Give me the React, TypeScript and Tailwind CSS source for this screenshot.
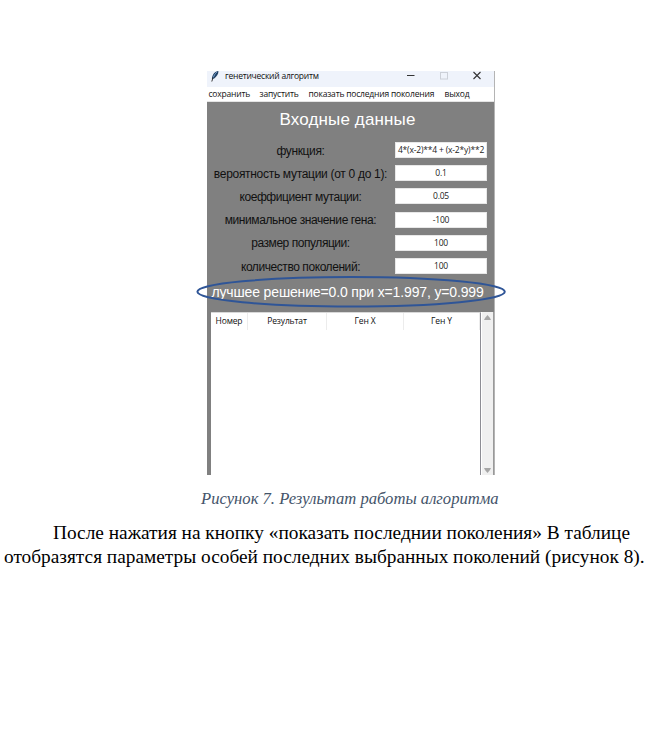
import React from "react";

const fields = [
  { label: "функция:", value: "4*(x-2)**4 + (x-2*y)**2", look: "tracking-[-0.35px]" },
  { label: "вероятность мутации (от 0 до 1):", value: "0.1", look: "tracking-[-0.3px]" },
  { label: "коеффициент мутации:", value: "0.05", look: "tracking-[-0.45px]" },
  { label: "минимальное значение гена:", value: "-100", look: "tracking-[-0.4px]" },
  { label: "размер популяции:", value: "100", look: "tracking-[-0.45px]" },
  { label: "количество поколений:", value: "100", look: "tracking-[-0.43px]" },
];

function TitleBar() {
  return (
    <div className="flex h-4 items-start bg-[#eff3fb] pl-1">
      <svg className="h-[11px] w-[8px]" viewBox="0 0 8 11">
        <path d="M7.4 0C4 .4 1.2 3 .9 8L3.2 7.4C5.8 5.4 7.6 3 7.4 0Z" fill="#1f3f63" />
        <path d="M5.8 1.2C4 2.7 2.8 4.7 2.4 6.5" stroke="#7fa9d6" strokeWidth="1" fill="none" />
        <path d="M2 6.5L.8 10.5" stroke="#222" strokeWidth=".9" />
      </svg>
      <span className="ml-[6px] text-[8.5px] leading-[10px] tracking-[-0.23px] text-[#111]">генетический алгоритм</span>
      <svg className="ml-auto h-[11px] w-[92px]" viewBox="0 0 92 11" fill="none">
        <path d="M5 4.5H12.5" stroke="#333" strokeWidth="1" />
        <rect x="38.5" y="1.5" width="7" height="6.5" stroke="#ccd0d8" />
        <path d="M71.5 1L78.5 8M78.5 1L71.5 8" stroke="#333" strokeWidth="1.1" />
      </svg>
    </div>
  );
}

function Menu() {
  return (
    <div className="flex h-[15px] border-b border-[#e4e4e4] bg-white pl-[1.5px] text-[8.5px] leading-[14px] tracking-[-0.2px] text-[#111]">
      <span className="w-[51px] whitespace-nowrap">сохранить</span>
      <span className="w-[49px] whitespace-nowrap">запустить</span>
      <span className="w-[136px] whitespace-nowrap">показать последния поколения</span>
      <span>выход</span>
    </div>
  );
}

export default function App() {
  return (
    <main className="h-[732px] w-[659px] overflow-hidden bg-white pt-[71px]">
      <section className="relative ml-[207px] flex h-[404px] w-[288px] flex-col border-r border-[#b4b4b4] bg-[#808080] font-['Open_Sans',sans-serif]">
        <TitleBar />
        <Menu />
        <h1 className="h-[37px] whitespace-nowrap pl-[72.5px] pt-[6px] font-['Liberation_Sans',sans-serif] text-[17px] leading-[24px] tracking-[0.14px] text-white">
          Входные данные
        </h1>
        <div className="flex flex-col pt-[3px]">
          {fields.map((f) => (
            <div key={f.label} className="flex h-[23.2px] items-start">
              <span className={`w-[187px] whitespace-nowrap pt-[0.6px] text-center font-['Liberation_Sans',sans-serif] text-[12px] leading-[16px] text-[#111] ${f.look}`}>
                {f.label}
              </span>
              <span className="ml-[1px] h-[16px] w-[92px] whitespace-nowrap border border-[#e8e8e8] bg-white text-center text-[8.5px] leading-[14px] tracking-[-0.18px] text-[#222]">
                {f.value}
              </span>
            </div>
          ))}
        </div>
        <div className="h-[30.8px] whitespace-nowrap pl-[4.5px] font-['Liberation_Sans',sans-serif] text-[14px] leading-[23px] tracking-[-0.15px] text-white">
          лучшее решение=0.0 при x=1.997, y=0.999
        </div>
        <div className="flex min-h-0 flex-1 pl-1">
          <div className="w-[270px] border-r border-t border-[#8d8d94] border-t-[#d8d8d8] bg-white">
            <div className="flex h-[17px] text-center text-[8.5px] leading-[16px] tracking-[-0.15px] text-[#111]">
              <span className="w-[37px] border-r border-[#ececec]">Номер</span>
              <span className="w-[79px] border-r border-[#ececec]">Результат</span>
              <span className="w-[77px] border-r border-[#ececec]">Ген X</span>
              <span className="w-[76px] border-r border-[#ececec]">Ген Y</span>
            </div>
          </div>
          <div className="flex w-[13px] flex-col items-center justify-between border-l border-r border-white border-r-[#999] bg-[#f0f0f0] pb-[1px] pt-[2.5px]">
            <svg className="h-[7px] w-[7px]" viewBox="0 0 7 7"><path d="M0 6L1 4L3.5 1L6 4L7 6Z" fill="#a6a6a6" /></svg>
            <svg className="h-[7px] w-[7px]" viewBox="0 0 7 7"><path d="M0 1L1 3L3.5 6L6 3L7 1Z" fill="#a6a6a6" /></svg>
          </div>
        </div>
        <svg className="absolute left-[-11px] top-[205px] h-[33px] w-[311px]" viewBox="0 0 311 33" fill="none">
          <ellipse cx="155.1" cy="15.8" rx="153.7" ry="14.8" stroke="#2f5597" strokeWidth="2" />
        </svg>
      </section>
      <p className="mt-[13px] whitespace-nowrap pl-[201px] font-['Liberation_Serif',serif] text-[16.63px] italic leading-[21px] text-[#44546a]">
        Рисунок 7. Результат работы алгоритма
      </p>
      <p className="mt-[12px] whitespace-nowrap pl-1 font-['Liberation_Serif',serif] text-[19.33px] leading-[24px] text-black">
        <span className="ml-[49px]">После нажатия на кнопку «показать последнии поколения» В таблице</span>
        <br />
        <span>отобразятся параметры особей последних выбранных поколений (рисунок 8).</span>
      </p>
    </main>
  );
}
